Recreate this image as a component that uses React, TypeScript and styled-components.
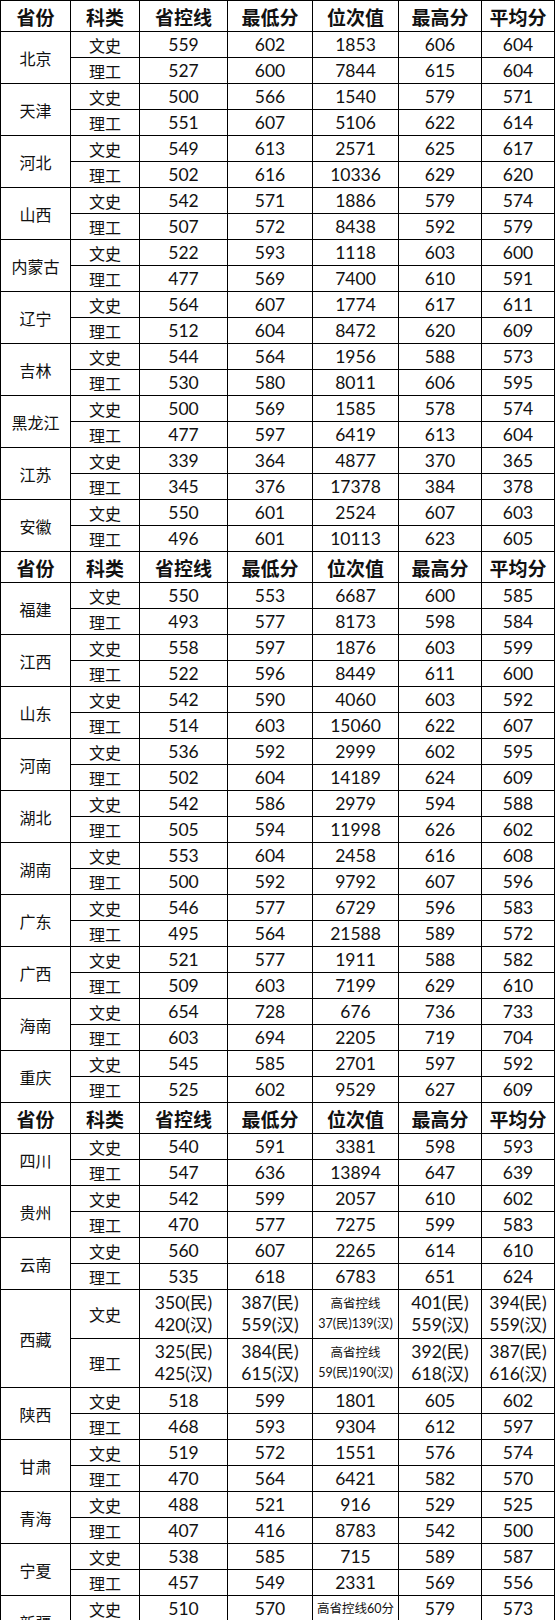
import React from "react";
import styled, { createGlobalStyle } from "styled-components";

const Global = createGlobalStyle`
  html, body { margin: 0; padding: 0; background: #fff; }
  body { font-family: Lato, "Noto Sans CJK SC", sans-serif; color: #111; }
`;

const Table = styled.table`
  border-collapse: collapse;
  table-layout: fixed;
  width: 555px;
  font-family: Lato, "Noto Sans CJK SC", sans-serif;
`;

const Cell = styled.td`
  border: 1px solid #000;
  padding: 0;
  text-align: center;
  vertical-align: middle;
  white-space: nowrap;
  overflow: hidden;
`;

const HeadCell = styled(Cell).attrs({ as: "th" })`
  height: 30px;
  font-family: "Noto Sans CJK SC", sans-serif;
  font-weight: 700;
  font-size: 19px;
  color: #111;
`;

const ProvinceCell = styled(Cell)`
  font-family: "Noto Sans CJK SC", sans-serif;
  font-size: 16px;
`;

const TypeCell = styled(Cell)<{ $tall?: boolean }>`
  height: ${(p) => (p.$tall ? "48px" : "25px")};
  font-family: "Noto Sans CJK SC", sans-serif;
  font-size: 16px;
  line-height: 20px;
`;

const NumCell = styled(Cell)`
  font-size: 17.5px;
  line-height: 22px;
`;

const NoteCell = styled(Cell)`
  font-size: 12.5px;
  line-height: 20px;
  font-family: Lato, "Noto Sans CJK SC", sans-serif;
`;

const Line = styled.div`
  display: block;
`;

type Val = string | [string, string];
type Row = { type: string; vals: Val[]; notes?: number[] };
type Province = { name: string; rows: Row[]; tall?: boolean };

const r = (type: string, ...vals: Val[]): Row => ({ type, vals });

const block1: Province[] = [
  { name: "北京", rows: [r("文史", "559", "602", "1853", "606", "604"), r("理工", "527", "600", "7844", "615", "604")] },
  { name: "天津", rows: [r("文史", "500", "566", "1540", "579", "571"), r("理工", "551", "607", "5106", "622", "614")] },
  { name: "河北", rows: [r("文史", "549", "613", "2571", "625", "617"), r("理工", "502", "616", "10336", "629", "620")] },
  { name: "山西", rows: [r("文史", "542", "571", "1886", "579", "574"), r("理工", "507", "572", "8438", "592", "579")] },
  { name: "内蒙古", rows: [r("文史", "522", "593", "1118", "603", "600"), r("理工", "477", "569", "7400", "610", "591")] },
  { name: "辽宁", rows: [r("文史", "564", "607", "1774", "617", "611"), r("理工", "512", "604", "8472", "620", "609")] },
  { name: "吉林", rows: [r("文史", "544", "564", "1956", "588", "573"), r("理工", "530", "580", "8011", "606", "595")] },
  { name: "黑龙江", rows: [r("文史", "500", "569", "1585", "578", "574"), r("理工", "477", "597", "6419", "613", "604")] },
  { name: "江苏", rows: [r("文史", "339", "364", "4877", "370", "365"), r("理工", "345", "376", "17378", "384", "378")] },
  { name: "安徽", rows: [r("文史", "550", "601", "2524", "607", "603"), r("理工", "496", "601", "10113", "623", "605")] },
];

const block2: Province[] = [
  { name: "福建", rows: [r("文史", "550", "553", "6687", "600", "585"), r("理工", "493", "577", "8173", "598", "584")] },
  { name: "江西", rows: [r("文史", "558", "597", "1876", "603", "599"), r("理工", "522", "596", "8449", "611", "600")] },
  { name: "山东", rows: [r("文史", "542", "590", "4060", "603", "592"), r("理工", "514", "603", "15060", "622", "607")] },
  { name: "河南", rows: [r("文史", "536", "592", "2999", "602", "595"), r("理工", "502", "604", "14189", "624", "609")] },
  { name: "湖北", rows: [r("文史", "542", "586", "2979", "594", "588"), r("理工", "505", "594", "11998", "626", "602")] },
  { name: "湖南", rows: [r("文史", "553", "604", "2458", "616", "608"), r("理工", "500", "592", "9792", "607", "596")] },
  { name: "广东", rows: [r("文史", "546", "577", "6729", "596", "583"), r("理工", "495", "564", "21588", "589", "572")] },
  { name: "广西", rows: [r("文史", "521", "577", "1911", "588", "582"), r("理工", "509", "603", "7199", "629", "610")] },
  { name: "海南", rows: [r("文史", "654", "728", "676", "736", "733"), r("理工", "603", "694", "2205", "719", "704")] },
  { name: "重庆", rows: [r("文史", "545", "585", "2701", "597", "592"), r("理工", "525", "602", "9529", "627", "609")] },
];

const block3: Province[] = [
  { name: "四川", rows: [r("文史", "540", "591", "3381", "598", "593"), r("理工", "547", "636", "13894", "647", "639")] },
  { name: "贵州", rows: [r("文史", "542", "599", "2057", "610", "602"), r("理工", "470", "577", "7275", "599", "583")] },
  { name: "云南", rows: [r("文史", "560", "607", "2265", "614", "610"), r("理工", "535", "618", "6783", "651", "624")] },
  {
    name: "西藏",
    tall: true,
    rows: [
      { type: "文史", vals: [["350(民)", "420(汉)"], ["387(民)", "559(汉)"], ["高省控线", "37(民)139(汉)"], ["401(民)", "559(汉)"], ["394(民)", "559(汉)"]], notes: [2] },
      { type: "理工", vals: [["325(民)", "425(汉)"], ["384(民)", "615(汉)"], ["高省控线", "59(民)190(汉)"], ["392(民)", "618(汉)"], ["387(民)", "616(汉)"]], notes: [2] },
    ],
  },
  { name: "陕西", rows: [r("文史", "518", "599", "1801", "605", "602"), r("理工", "468", "593", "9304", "612", "597")] },
  { name: "甘肃", rows: [r("文史", "519", "572", "1551", "576", "574"), r("理工", "470", "564", "6421", "582", "570")] },
  { name: "青海", rows: [r("文史", "488", "521", "916", "529", "525"), r("理工", "407", "416", "8783", "542", "500")] },
  { name: "宁夏", rows: [r("文史", "538", "585", "715", "589", "587"), r("理工", "457", "549", "2331", "569", "556")] },
  {
    name: "新疆",
    rows: [
      { type: "文史", vals: ["510", "570", "高省控线60分", "579", "573"], notes: [2] },
      r("理工", "", "", "", "", ""),
    ],
  },
];

const headers = ["省份", "科类", "省控线", "最低分", "位次值", "最高分", "平均分"];
const widths = [70, 69, 88, 85, 86, 83, 73];

const renderVal = (v: Val) =>
  Array.isArray(v) ? (
    <>
      <Line>{v[0]}</Line>
      <Line>{v[1]}</Line>
    </>
  ) : (
    v
  );

const HeaderRow = () => (
  <tr>
    {headers.map((h) => (
      <HeadCell key={h}>{h}</HeadCell>
    ))}
  </tr>
);

const Block = ({ data }: { data: Province[] }) => (
  <>
    <HeaderRow />
    {data.map((p) =>
      p.rows.map((row, i) => (
        <tr key={p.name + row.type}>
          {i === 0 && <ProvinceCell rowSpan={p.rows.length}>{p.name}</ProvinceCell>}
          <TypeCell $tall={p.tall}>{row.type}</TypeCell>
          {row.vals.map((v, j) =>
            row.notes?.includes(j) ? (
              <NoteCell key={j}>{renderVal(v)}</NoteCell>
            ) : (
              <NumCell key={j}>{renderVal(v)}</NumCell>
            )
          )}
        </tr>
      ))
    )}
  </>
);

export default function App() {
  return (
    <>
      <Global />
      <Table>
        <colgroup>
          {widths.map((w, i) => (
            <col key={i} style={{ width: w }} />
          ))}
        </colgroup>
        <tbody>
          <Block data={block1} />
          <Block data={block2} />
          <Block data={block3} />
        </tbody>
      </Table>
    </>
  );
}
